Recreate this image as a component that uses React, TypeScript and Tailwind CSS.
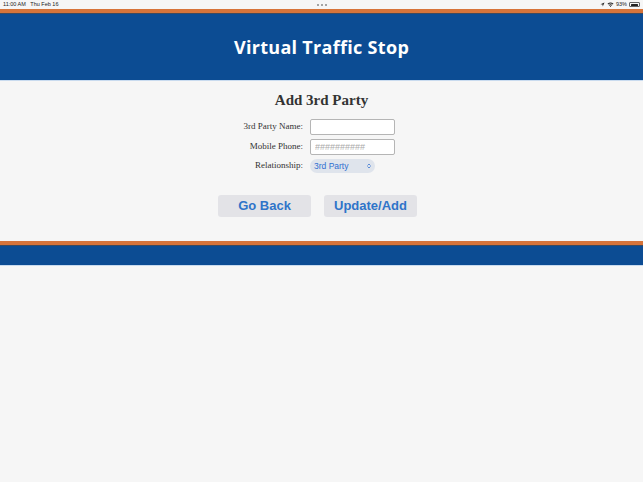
import { ChevronsUpDown } from 'lucide-react';

function StatusBar() {
  return (
    <div className="h-[9px] flex items-center justify-between px-[3px] bg-[#f6f6f6] text-[5.5px] leading-none text-[#222] font-['Liberation_Sans',sans-serif]">
      <span>11:00 AM&nbsp;&nbsp; Thu Feb 16</span>
      <span className="flex gap-[2px] absolute left-1/2 -translate-x-1/2">
        <span className="w-[2px] h-[2px] rounded-full bg-[#888]" />
        <span className="w-[2px] h-[2px] rounded-full bg-[#888]" />
        <span className="w-[2px] h-[2px] rounded-full bg-[#888]" />
      </span>
      <span className="flex items-center gap-[2px]">
        <svg width="5" height="5" viewBox="0 0 10 10"><path d="M9 1 L1 4.5 L5 5 L5.5 9 Z" fill="#222" /></svg>
        <svg width="7" height="5" viewBox="0 0 14 10">
          <path d="M1 3.5 A9 9 0 0 1 13 3.5 L11.5 5 A7 7 0 0 0 2.5 5 Z" fill="#222" />
          <path d="M3.5 6 A5 5 0 0 1 10.5 6 L9 7.5 A3 3 0 0 0 5 7.5 Z" fill="#222" />
          <circle cx="7" cy="9" r="1" fill="#222" />
        </svg>
        <span>93%</span>
        <span className="w-[11px] h-[5px] rounded-[1px] border-[0.5px] border-[#666] p-[0.5px] flex">
          <span className="w-[90%] h-full bg-[#222] rounded-[0.5px]" />
        </span>
      </span>
    </div>
  );
}

function Field({ label, children }: { label: string; children: React.ReactNode }) {
  return (
    <div className="flex items-center">
      <span className="w-[310px] pr-[7px] text-right text-[9px] text-[#333] font-['Liberation_Serif',serif]">{label}</span>
      {children}
    </div>
  );
}

export default function App() {
  return (
    <div className="relative w-[643px] h-[482px] bg-[#f6f6f6] overflow-hidden">
      <StatusBar />
      <div className="h-[4px] bg-[#d7743a]" />
      <div className="h-[1px] bg-[#3d4a5e]" />
      <div className="h-[66px] bg-[#0c4c93] flex items-center justify-center">
        <h1 className="text-white text-[18px] font-bold tracking-[0.3px] font-['Open_Sans',sans-serif]">Virtual Traffic Stop</h1>
      </div>
      <div className="h-[1px] bg-[#c9dbef]" />

      <h2 className="mt-[10px] text-center text-[15px] font-bold text-[#333] font-['Liberation_Serif',serif] leading-[18px]">Add 3rd Party</h2>

      <div className="mt-[10px] flex flex-col gap-[4px]">
        <Field label="3rd Party Name:">
          <input className="w-[85px] h-[16px] rounded-[2px] border border-[#b5b5b5] bg-white" />
        </Field>
        <Field label="Mobile Phone:">
          <input
            placeholder="##########"
            className="w-[85px] h-[16px] rounded-[2px] border border-[#b5b5b5] bg-white px-[4px] text-[9px] text-[#333] placeholder:text-[#aaa] font-['Liberation_Sans',sans-serif]"
          />
        </Field>
        <Field label="Relationship:">
          <div className="w-[65px] h-[14px] rounded-full bg-[#dfe4ec] flex items-center justify-between pl-[4px] pr-[3px] text-[8.5px] text-[#2f6fd0] font-['Liberation_Sans',sans-serif]">
            <span>3rd Party</span>
            <ChevronsUpDown className="w-[6px] h-[6px]" strokeWidth={3} />
          </div>
        </Field>
      </div>

      <div className="mt-[22px] flex pl-[218px] gap-[13px]">
        <button className="w-[93px] h-[22px] rounded-[3px] bg-[#e3e3e7] text-[#2f74c9] text-[13px] font-bold font-['Liberation_Sans',sans-serif]">Go Back</button>
        <button className="w-[93px] h-[22px] rounded-[3px] bg-[#e3e3e7] text-[#2f74c9] text-[13px] font-bold font-['Liberation_Sans',sans-serif]">Update/Add</button>
      </div>

      <div className="mt-[24px] h-[4px] bg-[#d7743a]" />
      <div className="h-[1px] bg-[#3d4a5e]" />
      <div className="h-[19px] bg-[#0c4c93]" />
      <div className="h-[1px] bg-[#c9dbef]" />
    </div>
  );
}
